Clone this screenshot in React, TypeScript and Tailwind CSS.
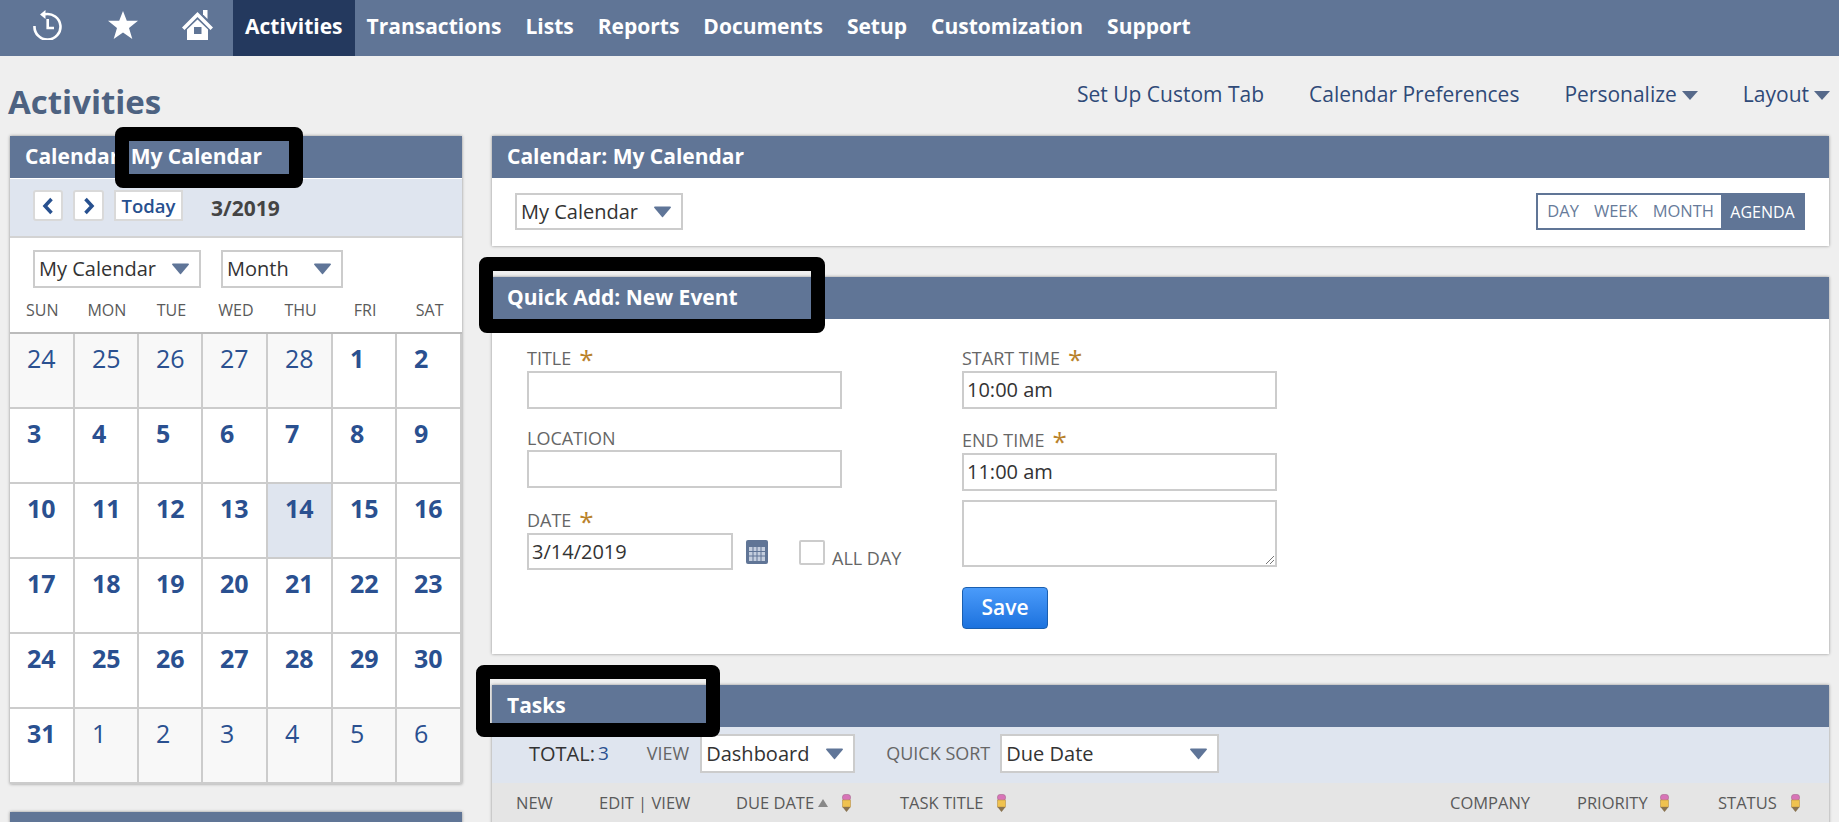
import React from "react";

const navItems = ["Activities", "Transactions", "Lists", "Reports", "Documents", "Setup", "Customization", "Support"];
const dayNames = ["SUN", "MON", "TUE", "WED", "THU", "FRI", "SAT"];
const days = [24, 25, 26, 27, 28, 1, 2, 3, 4, 5, 6, 7, 8, 9, 10, 11, 12, 13, 14, 15, 16, 17, 18, 19, 20, 21, 22, 23, 24, 25, 26, 27, 28, 29, 30, 31, 1, 2, 3, 4, 5, 6];

const Caret = () => (
  <svg width="19" height="12" viewBox="0 0 19 12" className="shrink-0">
    <path d="M1 1.5 Q1 0.5 2 0.5 H17 Q18 0.5 18 1.5 L10 11 Q9.5 11.5 9 11 Z" fill="#5f7598" />
  </svg>
);

const SmallCaret = () => (
  <svg width="16" height="9" viewBox="0 0 16 9" className="mt-[11px] ml-[5px]">
    <path d="M0 0 H16 L8 9 Z" fill="#56698a" />
  </svg>
);

const Pencil = () => (
  <svg width="9" height="18" viewBox="0 0 9 18" className="shrink-0">
    <rect x="0.5" y="0.5" width="8" height="6" rx="2.5" fill="#d874b8" stroke="#a8688f" strokeWidth="0.6" />
    <rect x="0.5" y="6" width="8" height="7" fill="#f0c24f" stroke="#b8924a" strokeWidth="0.6" />
    <path d="M0.5 13 H8.5 L4.5 18 Z" fill="#8a7350" />
  </svg>
);

const Select = ({ label, className }: { label: string; className: string }) => (
  <div className={`flex items-center justify-between bg-white border-2 border-[#ccc] pl-[4px] pr-[9px] text-[#333] text-[20px] ${className}`}>
    <span>{label}</span>
    <Caret />
  </div>
);

const Redaction = ({ className }: { className: string }) => (
  <div className={`absolute border-[14px] border-black rounded-[8px] ${className}`} />
);

const Panel = ({ title, children }: { title: string; children?: React.ReactNode }) => (
  <section className="bg-white shadow-[0_0_3px_rgba(0,0,0,0.4)]">
    <h2 className="h-[42px] bg-[#607596] pl-[15px] flex items-center text-white text-[21px] font-bold">{title}</h2>
    {children}
  </section>
);

const Label = ({ text, required }: { text: string; required?: boolean }) => (
  <div className="h-[20px] flex items-center text-[18px] text-[#666] leading-none">
    {text}
    {required && <span className="ml-[8px] mt-[-5px] text-[#b9822b] text-[26px] leading-none h-[20px]">*</span>}
  </div>
);

const Input = ({ value, className }: { value?: string; className: string }) => (
  <div className={`flex items-center bg-white border-2 border-[#ccc] pl-[3px] text-[#333] text-[20px] ${className}`}>{value}</div>
);

const Field = ({ className, children }: { className: string; children: React.ReactNode }) => (
  <div className={className}>{children}</div>
);

const CalendarPanel = () => (
  <Panel title="Calendar: My Calendar">
    <div className="h-[59px] mt-px bg-[#dfe5ef] border-b-2 border-[#d3d3d3] pl-[23px] flex items-center gap-[10px]">
      <button className="w-[30px] h-[31px] mb-[4px] bg-white border-2 border-[#d9d9d9] rounded-[3px] flex items-center justify-center">
        <svg width="14" height="18" viewBox="0 0 14 18"><path d="M10.5 2 L4 9 L10.5 16" fill="none" stroke="#27508f" strokeWidth="3.5" /></svg>
      </button>
      <button className="w-[31px] h-[31px] mb-[4px] bg-white border-2 border-[#d9d9d9] rounded-[3px] flex items-center justify-center">
        <svg width="14" height="18" viewBox="0 0 14 18"><path d="M3.5 2 L10 9 L3.5 16" fill="none" stroke="#27508f" strokeWidth="3.5" /></svg>
      </button>
      <button className="w-[69px] h-[31px] mb-[4px] bg-white border-2 border-[#d9d9d9] text-[#27508f] text-[18.5px] font-semibold leading-none pt-px">Today</button>
      <span className="ml-[18px] mt-[2px] text-[21px] font-bold text-[#444]">3/2019</span>
    </div>
    <div className="pt-[12px] pl-[23px] flex gap-[20px]">
      <Select label="My Calendar" className="w-[168px] h-[38px]" />
      <Select label="Month" className="w-[122px] h-[38px]" />
    </div>
    <div className="grid grid-cols-7 h-[46px] items-center text-center text-[16px] text-[#5a5a5a] border-b-2 border-[#bbb]">
      {dayNames.map((d) => (
        <div key={d}>{d}</div>
      ))}
    </div>
    <div className="grid grid-cols-[63px_64px_64px_65px_65px_64px_1fr] border-r-2 border-[#ccc]">
      {days.map((d, i) => {
        const outside = i < 5 || i > 35;
        const today = i === 18;
        return (
          <div
            key={i}
            className={`h-[75px] pl-[17px] pt-[6px] border-b-2 border-[#ccc] text-[25px] leading-[36px] text-[#2a5090] ${i % 7 === 0 ? "" : "border-l-2"} ${outside ? "bg-[#f8f8f8]" : today ? "bg-[#dfe5ef] font-bold" : "font-bold"}`}
          >
            {d}
          </div>
        );
      })}
    </div>
  </Panel>
);

const TopRightPanel = () => (
  <Panel title="Calendar: My Calendar">
    <div className="h-[67px] mt-px pl-[23px] pr-[24px] pb-[2px] flex items-center justify-between">
      <Select label="My Calendar" className="w-[168px] h-[37px]" />
      <div className="flex h-[37px] border-2 border-[#607596] text-[16.5px] text-[#677b9a] items-center">
        <span className="pl-[9px] pr-[15px]">DAY</span>
        <span className="pr-[15px]">WEEK</span>
        <span className="pr-[7px]">MONTH</span>
        <span className="h-full w-[82px] pl-px flex items-center justify-center bg-[#607596] text-white text-[16px]">AGENDA</span>
      </div>
    </div>
  </Panel>
);

const QuickAdd = () => (
  <Panel title="Quick Add: New Event">
    <div className="h-[335px] pl-[35px] pt-[29px] flex">
      <div className="w-[435px]">
        <Label text="TITLE" required />
        <Input className="w-[315px] h-[38px] mt-[3px]" />
        <Field className="mt-[19px]">
          <Label text="LOCATION" />
          <Input className="w-[315px] h-[38px] mt-[2px]" />
        </Field>
        <Field className="mt-[22px]">
          <Label text="DATE" required />
          <div className="flex mt-[3px]">
            <Input value="3/14/2019" className="w-[206px] h-[37px]" />
            <svg width="22" height="24" viewBox="0 0 22 24" className="ml-[13px] mt-[7px]">
              <rect width="22" height="24" rx="2" fill="#607596" />
              <rect x="3" y="7" width="16" height="14" fill="#c4cede" />
              <path d="M3 11.5 H19 M3 16 H19 M7 7 V21 M11 7 V21 M15 7 V21" stroke="#607596" strokeWidth="1" />
            </svg>
            <div className="w-[26px] h-[25px] ml-[31px] mt-[7px] border-2 border-[#ccc] rounded-[2px]" />
            <span className="ml-[7px] mt-[15px] h-[20px] text-[18px] leading-[20px] text-[#666]">ALL DAY</span>
          </div>
        </Field>
      </div>
      <div className="w-[315px]">
        <Label text="START TIME" required />
        <Input value="10:00 am" className="w-full h-[38px] mt-[3px]" />
        <Field className="mt-[21px]">
          <Label text="END TIME" required />
          <Input value="11:00 am" className="w-full h-[38px] mt-[3px]" />
        </Field>
        <div className="relative w-full h-[67px] mt-[9px] bg-white border-2 border-[#ccc]">
          <svg width="10" height="10" viewBox="0 0 10 10" className="absolute right-0 bottom-0">
            <path d="M1 9 L9 1 M5 9 L9 5" stroke="#777" strokeWidth="1" />
          </svg>
        </div>
        <button className="w-[86px] h-[42px] mt-[20px] rounded-[4px] border border-[#1a5fb0] bg-gradient-to-b from-[#4a9bfa] to-[#1b72de] text-white text-[21px] font-semibold">Save</button>
      </div>
    </div>
  </Panel>
);

const Tasks = () => (
  <Panel title="Tasks">
    <div className="h-[56px] pb-[3px] bg-[#dfe5ef] flex items-center text-[18px] text-[#666]">
      <span className="ml-[37px] text-[20px] text-[#333]">TOTAL:</span>
      <span className="ml-[3px] text-[19px] text-[#2a5090]">3</span>
      <span className="ml-[38px]">VIEW</span>
      <Select label="Dashboard" className="w-[155px] h-[39px] ml-[11px]" />
      <span className="ml-[31px]">QUICK SORT</span>
      <Select label="Due Date" className="w-[219px] h-[39px] ml-[10px]" />
    </div>
    <div className="h-[60px] bg-[#e5e5e5] flex items-start pt-[8px] text-[16.5px] text-[#5a5a5a]">
      <span className="ml-[24px] w-[83px]">NEW</span>
      <span className="w-[137px]">EDIT | VIEW</span>
      <span className="w-[164px] flex items-center gap-[4px]">
        DUE DATE
        <svg width="10" height="8" viewBox="0 0 10 8"><path d="M0 8 L5 0 L10 8 Z" fill="#888" /></svg>
        <span className="ml-[10px]"><Pencil /></span>
      </span>
      <span className="w-[550px] flex items-center gap-[13px]">
        TASK TITLE
        <Pencil />
      </span>
      <span className="w-[127px]">COMPANY</span>
      <span className="w-[141px] flex items-center gap-[12px]">
        PRIORITY
        <Pencil />
      </span>
      <span className="flex items-center gap-[14px]">
        STATUS
        <Pencil />
      </span>
    </div>
  </Panel>
);

export default function App() {
  return (
    <div className="relative h-[822px] overflow-hidden bg-[#efefef] font-['Open_Sans',sans-serif]">
      <nav className="h-[56px] bg-[#607596] flex text-white text-[21px] font-bold">
        <div className="w-[233px] flex items-start pt-[10px]">
          <svg width="30" height="30" viewBox="0 0 30 30" className="ml-[33px]" fill="none" stroke="#fff" strokeWidth="2.6">
            <path d="M12 4.2 A13 12.8 0 1 1 1.5 16" />
            <path d="M12.5 0 V9 L7 4.5 Z" fill="#fff" stroke="none" />
            <path d="M14.7 9 V18 H21" />
          </svg>
          <svg width="30" height="28" viewBox="0 0 30 28" className="ml-[45px] mt-px">
            <path d="M15 0 L18.8 9.8 H30 L21 17 L24.3 28 L15 21.6 L5.7 28 L9 17 L0 9.8 H11.2 Z" fill="#fff" />
          </svg>
          <svg width="31" height="30" viewBox="0 0 31 30" className="ml-[44px]">
            <path d="M0 17.5 L15.5 2 L31 17.5 L28.5 20 L15.5 7 L2.5 20 Z" fill="#fff" />
            <path d="M21 0 H25.5 V9 L21 4.5 Z" fill="#fff" />
            <path fillRule="evenodd" d="M5 19.5 L15.5 9.5 L26 19.5 V30 H5 Z M12 17 V24 H19.5 V17 Z" fill="#fff" />
          </svg>
        </div>
        {navItems.map((item, i) => (
          <a key={item} className={`flex items-center px-[12px] pb-[3px] ${i === 0 ? "bg-[#24395e]" : ""}`}>
            {item}
          </a>
        ))}
      </nav>

      <header className="h-[80px] pl-[8px] pr-[9px] flex justify-between">
        <h1 className="mt-[22px] text-[33px] font-bold text-[#4d6281] leading-[48px]">Activities</h1>
        <div className="mt-[24px] flex h-[28px] text-[21px] leading-[28px] text-[#2f4a78]">
          <a>Set Up Custom Tab</a>
          <a className="ml-[45px]">Calendar Preferences</a>
          <a className="ml-[45px] flex">Personalize<SmallCaret /></a>
          <a className="ml-[45px] flex">Layout<SmallCaret /></a>
        </div>
      </header>

      <main className="flex pl-[10px] pr-[10px] gap-[30px]">
        <div className="w-[452px] shrink-0 flex flex-col gap-[28px]">
          <CalendarPanel />
          <Panel title="" />
        </div>
        <div className="flex-1 flex flex-col gap-[31px]">
          <TopRightPanel />
          <QuickAdd />
          <Tasks />
        </div>
      </main>

      <Redaction className="left-[115px] top-[127px] w-[188px] h-[61px]" />
      <Redaction className="left-[479px] top-[257px] w-[346px] h-[76px]" />
      <Redaction className="left-[476px] top-[665px] w-[244px] h-[72px]" />
    </div>
  );
}
